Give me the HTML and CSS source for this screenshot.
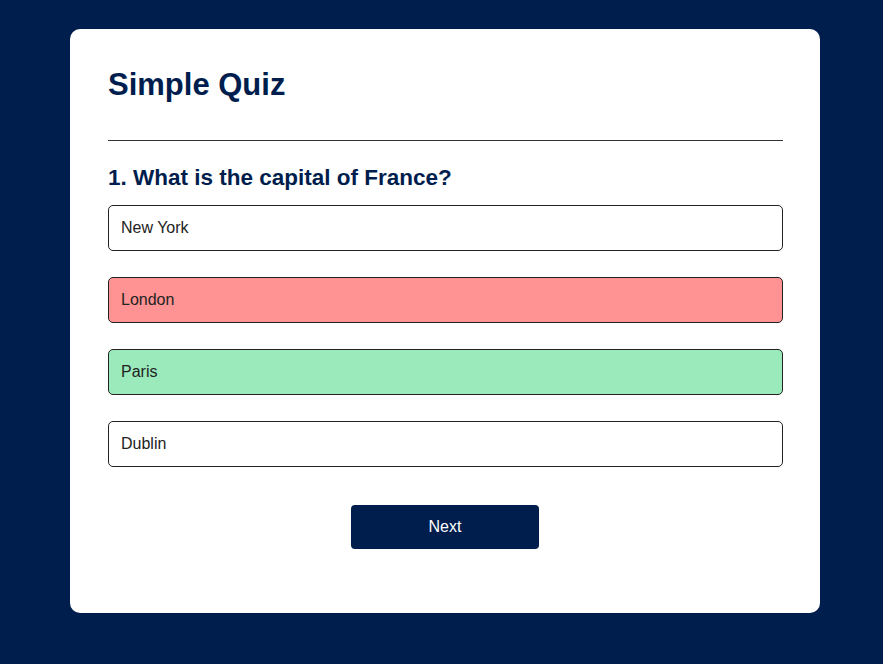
FILE: index.html
```html
<!DOCTYPE html>
<html>
<head>
<meta charset="utf-8">
<title>Simple Quiz</title>
<link rel="stylesheet" href="styles.css">
</head>
<body>
<div class="app">
  <h1 class="title">Simple Quiz</h1>
  <div class="quiz">
    <h2 class="question">1. What is the capital of France?</h2>
    <div class="answers">
      <button class="btn">New York</button>
      <button class="btn incorrect">London</button>
      <button class="btn correct">Paris</button>
      <button class="btn">Dublin</button>
    </div>
    <div class="actions">
      <button class="next-btn">Next</button>
    </div>
  </div>
</div>
</body>
</html>
```

FILE: styles.css
```css
* {
  margin: 0;
  padding: 0;
  box-sizing: border-box;
  font-family: "Liberation Sans", Arial, sans-serif;
}

body {
  background: #001e4d;
  padding: 29px 0 0 70px;
}

.app {
  background: #fff;
  width: 750px;
  border-radius: 10px;
  padding: 38px 37px 64px 38px;
}

.title {
  font-size: 31px;
  font-weight: 700;
  color: #001e4d;
  line-height: 36px;
  padding-bottom: 37px;
  border-bottom: 1px solid #333;
}

.quiz {
  padding-top: 24px;
}

.question {
  font-size: 22.5px;
  font-weight: 700;
  color: #001e4d;
  line-height: 26px;
  margin-bottom: 14px;
}

.answers {
  display: flex;
  flex-direction: column;
  gap: 26px;
}

.btn {
  display: block;
  width: 100%;
  height: 46px;
  background: #fff;
  color: #222;
  font-size: 16px;
  text-align: left;
  padding: 0 12px;
  border: 1px solid #222;
  border-radius: 5px;
}

.btn.correct {
  background: #9aeabc;
}

.btn.incorrect {
  background: #ff9393;
}

.actions {
  display: flex;
  justify-content: center;
  padding-top: 38px;
  padding-right: 1px;
}

.next-btn {
  width: 188px;
  height: 44px;
  background: #001e4d;
  color: #fff;
  font-size: 16px;
  border: 0;
  border-radius: 4px;
}
```
